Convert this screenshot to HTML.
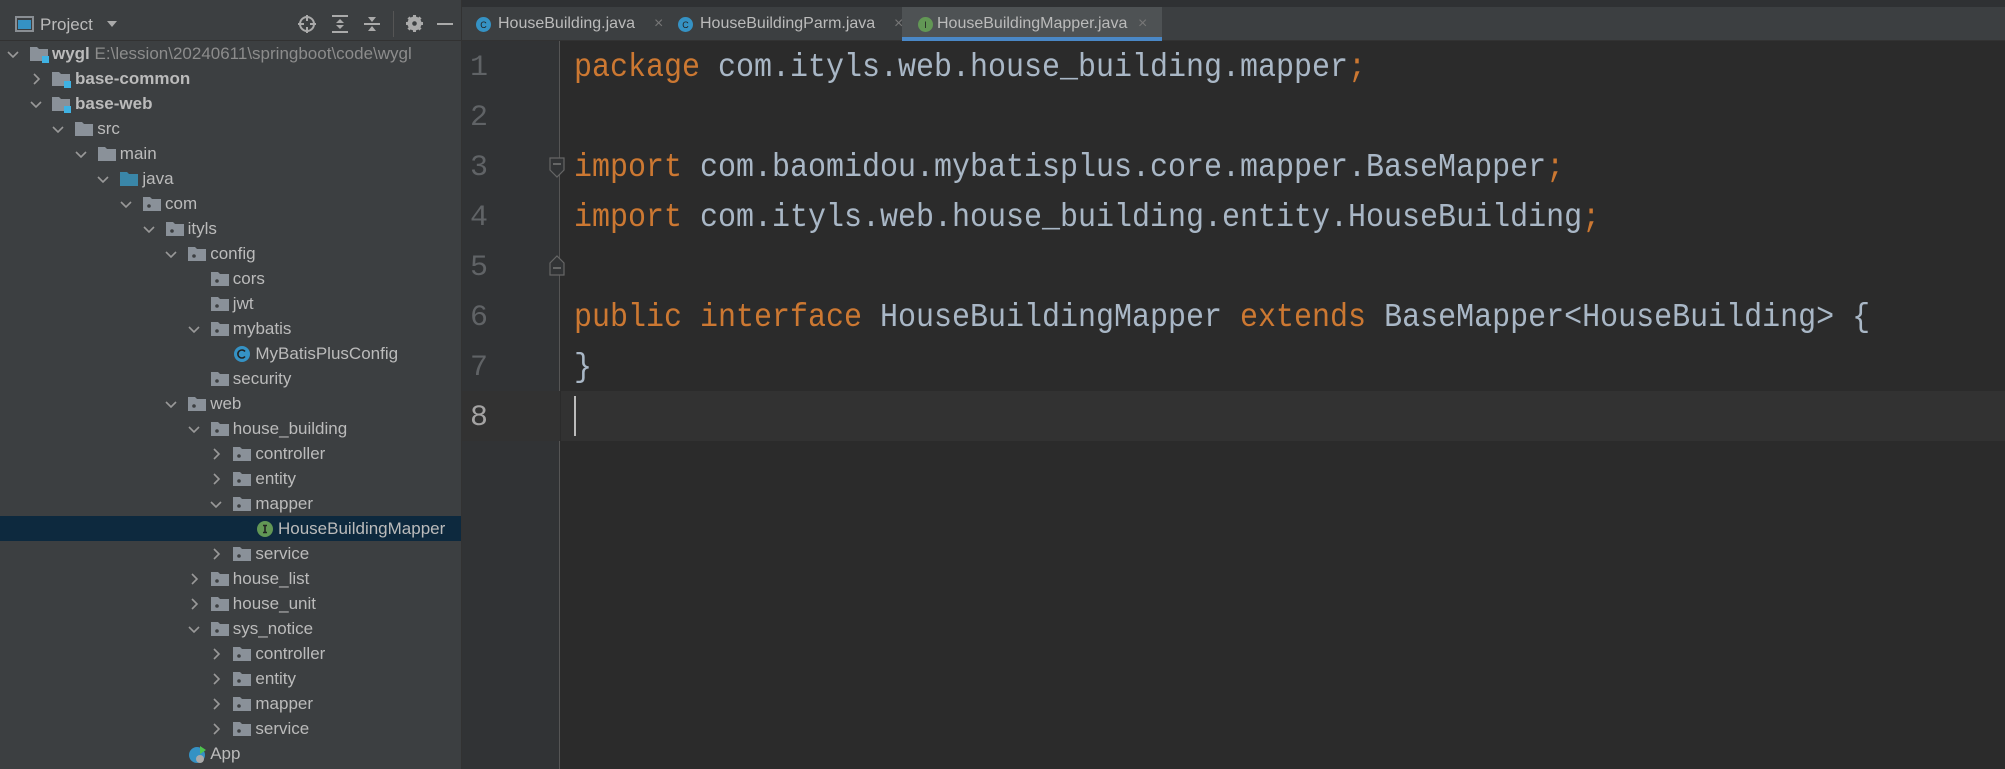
<!DOCTYPE html>
<html><head><meta charset="utf-8"><style>
*{margin:0;padding:0;box-sizing:border-box}
body{width:2005px;height:769px;overflow:hidden;background:#2b2b2b;position:relative;font-family:"Liberation Sans",sans-serif}
#side{position:absolute;left:0;top:0;width:462px;height:769px;background:#3c3f41;border-right:1px solid #323232}
#top{position:absolute;left:0;top:0;width:2005px;height:7px;background:#2f3133}
#hdr{position:absolute;left:0;top:7px;width:462px;height:34px;border-bottom:1px solid #323232}
.row{position:absolute;left:0;height:25px;width:461px;color:#bbbbbb;font-size:17px;line-height:25px}
.row.sel{background:#0d293e}
.row span.t{position:absolute;white-space:nowrap}
.row svg{position:absolute}
#tabs{position:absolute;left:462px;top:7px;width:1543px;height:34px;background:#3c3f41;border-bottom:1px solid #323232}
.tab{position:absolute;top:0;height:34px;color:#bbbbbb;font-size:16px;line-height:34px;white-space:nowrap}
#gut{position:absolute;left:462px;top:41px;width:98px;height:728px;background:#313335;border-right:1px solid #555555}
.ln{position:absolute;left:470px;width:20px;font-family:"Liberation Mono",monospace;font-size:30px;color:#606366;line-height:50px}
.code{position:absolute;left:574px;font-family:"Liberation Mono",monospace;font-size:33px;color:#a9b7c6;line-height:50px;white-space:pre;transform:scaleX(0.909);transform-origin:0 0}
.k{color:#cc7832}
</style></head><body>
<div id="top"></div>
<div id="side"></div>
<div id="hdr">
<svg style="position:absolute;left:15px;top:9px" width="19" height="16"><rect x="1" y="1" width="17" height="14" fill="none" stroke="#8a8f94" stroke-width="2"/><rect x="3" y="4" width="13" height="9" fill="#3592c4"/></svg>
<span style="position:absolute;left:40px;top:8px;color:#bbbbbb;font-size:17px">Project</span>
<svg style="position:absolute;left:106px;top:13px" width="12" height="8"><path d="M1 1h10L6 7z" fill="#aaa"/></svg>
<svg style="position:absolute;left:298px;top:8px" width="18" height="18"><circle cx="9" cy="9" r="7" fill="none" stroke="#aaa" stroke-width="2"/><path d="M9 0v6M9 12v6M0 9h6M12 9h6" stroke="#aaa" stroke-width="2"/></svg>
<svg style="position:absolute;left:332px;top:8px" width="16" height="18"><path d="M0 1h16M0 17h16" stroke="#aaa" stroke-width="2"/><path d="M8 4l4 4H4zM8 14l4-4H4z" fill="#aaa"/></svg>
<svg style="position:absolute;left:364px;top:8px" width="16" height="18"><path d="M0 9h16" stroke="#aaa" stroke-width="2"/><path d="M8 7l4-5H4zM8 11l4 5H4z" fill="#aaa"/></svg>
<div style="position:absolute;left:393px;top:4px;width:1px;height:26px;background:#555"></div>
<svg style="position:absolute;left:406px;top:8px" width="17" height="17"><circle cx="8.5" cy="8.5" r="5" fill="none" stroke="#aaa" stroke-width="4"/><path d="M8.5 0v17M0 8.5h17M2.5 2.5l12 12M14.5 2.5l-12 12" stroke="#aaa" stroke-width="3"/><circle cx="8.5" cy="8.5" r="2.3" fill="#3c3f41"/></svg>
<div style="position:absolute;left:437px;top:16px;width:16px;height:2px;background:#aaa"></div>
</div>

<div id="tabs">
<div class="tab" style="left:14px"><svg style="position:absolute;left:0;top:10px" width="15" height="15"><circle cx="7.5" cy="7.5" r="7.5" fill="#3592c4"/><text x="7.5" y="11" font-size="9" text-anchor="middle" fill="#222" font-family="Liberation Sans">C</text></svg><span style="position:absolute;left:22px">HouseBuilding.java</span><span style="position:absolute;left:178px;color:#777">×</span></div>
<div class="tab" style="left:216px"><svg style="position:absolute;left:0;top:10px" width="15" height="15"><circle cx="7.5" cy="7.5" r="7.5" fill="#3592c4"/><text x="7.5" y="11" font-size="9" text-anchor="middle" fill="#222" font-family="Liberation Sans">C</text></svg><span style="position:absolute;left:22px">HouseBuildingParm.java</span><span style="position:absolute;left:216px;color:#777">×</span></div>
<div class="tab" style="left:440px;width:260px;background:#4e5254;border-bottom:4px solid #4a88c7"><svg style="position:absolute;left:16px;top:10px" width="15" height="15"><circle cx="7.5" cy="7.5" r="7.5" fill="#629755"/><text x="7.5" y="11" font-size="9" text-anchor="middle" fill="#222" font-family="Liberation Sans">I</text></svg><span style="position:absolute;left:35px">HouseBuildingMapper.java</span><span style="position:absolute;left:236px;color:#777">×</span></div>
</div>

<div id="gut"></div>
<div style="position:absolute;left:462px;top:391px;width:98px;height:50px;background:#323232"></div>
<div style="position:absolute;left:561px;top:391px;width:1444px;height:50px;background:#323232"></div>
<svg style="position:absolute;left:549px;top:157px" width="16" height="22"><path d="M1 1h14v12l-7 7-7-7z" fill="#313335" stroke="#666" stroke-width="1.2"/><path d="M4 7h8" stroke="#888" stroke-width="1.2"/></svg>
<svg style="position:absolute;left:549px;top:254px" width="16" height="22"><path d="M1 21h14V9L8 2 1 9z" fill="#313335" stroke="#666" stroke-width="1.2"/><path d="M4 14h8" stroke="#888" stroke-width="1.2"/></svg>

<div class="ln" style="top:43px">1</div>
<div class="ln" style="top:93px">2</div>
<div class="ln" style="top:143px">3</div>
<div class="ln" style="top:193px">4</div>
<div class="ln" style="top:243px">5</div>
<div class="ln" style="top:293px">6</div>
<div class="ln" style="top:343px">7</div>
<div class="ln" style="top:393px;color:#a4a3a3">8</div>

<div class="code" style="top:43px"><span class="k">package</span> com.ityls.web.house_building.mapper<span class="k">;</span></div>
<div class="code" style="top:143px"><span class="k">import</span> com.baomidou.mybatisplus.core.mapper.BaseMapper<span class="k">;</span></div>
<div class="code" style="top:193px"><span class="k">import</span> com.ityls.web.house_building.entity.HouseBuilding<span class="k">;</span></div>
<div class="code" style="top:293px"><span class="k">public interface</span> HouseBuildingMapper <span class="k">extends</span> BaseMapper&lt;HouseBuilding&gt; {</div>
<div class="code" style="top:343px">}</div>
<div style="position:absolute;left:574px;top:396px;width:2px;height:40px;background:#bbbbbb"></div>

<div style="position:absolute;left:0;top:0">
<div class="row" style="top:40.5px"><svg style="left:7px;top:7px" width="12" height="12"><path d="M1 4l5 5 5-5" fill="none" stroke="#999" stroke-width="1.6"/></svg><svg style="left:30px;top:4px" width="20" height="18"><path d="M0 2h7l2 2h9v12H0z" fill="#8a9199"/><rect x="12" y="11" width="7" height="7" fill="#3fb2e3"/></svg><span class="t" style="left:52px"><b>wygl</b> <span style="color:#8c8c8c">E:\lession\20240611\springboot\code\wygl</span></span></div>
<div class="row" style="top:65.5px"><svg style="left:30px;top:7px" width="12" height="12"><path d="M4 1l5 5-5 5" fill="none" stroke="#999" stroke-width="1.6"/></svg><svg style="left:52px;top:4px" width="20" height="18"><path d="M0 2h7l2 2h9v12H0z" fill="#8a9199"/><rect x="12" y="11" width="7" height="7" fill="#3fb2e3"/></svg><span class="t" style="left:75px;font-weight:bold">base-common</span></div>
<div class="row" style="top:90.5px"><svg style="left:30px;top:7px" width="12" height="12"><path d="M1 4l5 5 5-5" fill="none" stroke="#999" stroke-width="1.6"/></svg><svg style="left:52px;top:4px" width="20" height="18"><path d="M0 2h7l2 2h9v12H0z" fill="#8a9199"/><rect x="12" y="11" width="7" height="7" fill="#3fb2e3"/></svg><span class="t" style="left:75px;font-weight:bold">base-web</span></div>
</div>
<div id="gen"></div>
<script>
var items=[
[3,"src",2,1,"f"],[4,"main",3,1,"f"],[5,"java",4,1,"b"],[6,"com",5,1,"p"],[7,"ityls",6,1,"p"],[8,"config",7,1,"p"],
[9,"cors",8,0,"p"],[10,"jwt",8,0,"p"],[11,"mybatis",8,1,"p"],[12,"MyBatisPlusConfig",9,0,"c"],[13,"security",8,0,"p"],
[14,"web",7,1,"p"],[15,"house_building",8,1,"p"],[16,"controller",9,2,"p"],[17,"entity",9,2,"p"],[18,"mapper",9,1,"p"],
[19,"HouseBuildingMapper",10,0,"i"],[20,"service",9,2,"p"],[21,"house_list",8,2,"p"],[22,"house_unit",8,2,"p"],
[23,"sys_notice",8,1,"p"],[24,"controller",9,2,"p"],[25,"entity",9,2,"p"],[26,"mapper",9,2,"p"],[27,"service",9,2,"p"],[28,"App",7,0,"a"]];
var h="";
items.forEach(function(it){
 var r=it[0],L=it[2],c=13+22.6*L,top=53+25*r-12.5;
 h+='<div class="row'+(r==19?' sel':'')+'" style="top:'+top+'px">';
 if(it[3]==1)h+='<svg style="left:'+(c-6)+'px;top:7px" width="12" height="12"><path d="M1 4l5 5 5-5" fill="none" stroke="#999" stroke-width="1.6"/></svg>';
 if(it[3]==2)h+='<svg style="left:'+(c-6)+'px;top:7px" width="12" height="12"><path d="M4 1l5 5-5 5" fill="none" stroke="#999" stroke-width="1.6"/></svg>';
 var x=c+17,t=it[4];
 if(t=="f"||t=="b")h+='<svg style="left:'+x+'px;top:5px" width="18" height="16"><path d="M0 1h7l2 2h9v12H0z" fill="'+(t=="b"?"#3a86a8":"#8a9199")+'"/></svg>';
 if(t=="p")h+='<svg style="left:'+x+'px;top:5px" width="18" height="16"><path d="M0 1h7l2 2h9v12H0z" fill="#8a9199"/><circle cx="6" cy="10" r="1.8" fill="#3c3f41"/></svg>';
 if(t=="c")h+='<svg style="left:'+x+'px;top:4px" width="18" height="18"><circle cx="9" cy="9" r="8" fill="#3592c4"/><path d="M12 6.5a4 4 0 1 0 0 5" fill="none" stroke="#222" stroke-width="1.6"/></svg>';
 if(t=="i")h+='<svg style="left:'+x+'px;top:4px" width="18" height="18"><circle cx="9" cy="9" r="8" fill="#629755"/><path d="M7 5.5h4M9 5.5v7M7 12.5h4" stroke="#222" stroke-width="1.6"/></svg>';
 if(t=="a")h+='<svg style="left:'+x+'px;top:3px" width="20" height="20"><circle cx="9" cy="11" r="8" fill="#3592c4"/><path d="M12 2v8l6-4z" fill="#4ec34e"/><circle cx="12" cy="15" r="4" fill="#aaa"/></svg>';
 h+='<span class="t" style="left:'+(c+39)+'px">'+it[1]+'</span></div>';
});
document.getElementById("gen").innerHTML=h;
</script>
</body></html>
